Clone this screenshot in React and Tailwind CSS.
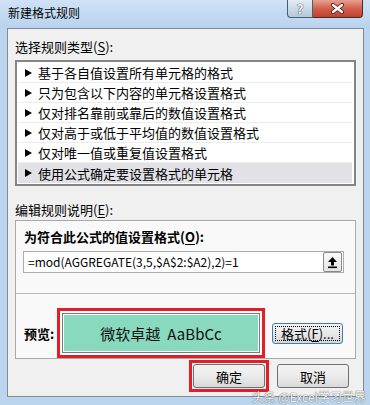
// App.jsx

const RULES = [
  "基于各自值设置所有单元格的格式",
  "只为包含以下内容的单元格设置格式",
  "仅对排名靠前或靠后的数值设置格式",
  "仅对高于或低于平均值的数值设置格式",
  "仅对唯一值或重复值设置格式",
  "使用公式确定要设置格式的单元格",
];

function Key({ children }) {
  return <span className="underline underline-offset-[2px]">{children}</span>;
}

function WinButton({ children, focused, className = "" }) {
  return (
    <div
      className={`flex items-center justify-center rounded-[3px] border text-[13px] leading-none text-black ${
        focused
          ? "border-[#3c7fb1] bg-gradient-to-b from-[#f4f4f4] via-[#e8e8e8] to-[#d6d6d6] p-[2px]"
          : "border-[#707070] bg-gradient-to-b from-[#f2f2f2] via-[#ebebeb] to-[#d9d9d9]"
      } ${className}`}
    >
      {focused ? (
        <span className="flex h-full w-full items-center justify-center border border-dotted border-black">
          {children}
        </span>
      ) : (
        children
      )}
    </div>
  );
}

function RuleRow({ text, selected, last }) {
  return (
    <div
      className={`flex h-[20px] items-center pl-[7px] ${
        last ? "" : "border-b border-[#ececec]"
      } ${selected ? "bg-[#e1e1e6]" : ""}`}
    >
      <span className="mr-[6px] h-0 w-0 border-y-[4px] border-l-[7px] border-y-transparent border-l-black" />
      <span className="text-[13px] leading-none text-black">{text}</span>
    </div>
  );
}

function TitleBar() {
  return (
    <div className="flex h-[28px] shrink-0 items-start bg-gradient-to-b from-[#cfe2f6] to-[#b9d2ed]">
      <div className="mt-[5px] pl-[8px] text-[12px] leading-[16px] text-black">
        新建格式规则
      </div>
      <div className="ml-auto mr-[7px] flex">
        <div className="flex h-[18px] w-[26px] items-center justify-center rounded-bl-[4px] border border-t-0 border-[#4a5d73] bg-gradient-to-b from-[#e3ecf5] to-[#b5c7da] text-[13px] font-bold leading-none text-white [text-shadow:0_0_1px_#26384d,0_0_1px_#26384d]">
          ?
        </div>
        <div className="flex h-[18px] w-[50px] items-center justify-center rounded-br-[4px] border border-l-0 border-t-0 border-[#4a2a26] bg-gradient-to-b from-[#e8a090] via-[#d0604c] to-[#c0402e]">
          <svg width="15" height="11" viewBox="0 0 15 11">
            <path d="M3 2 L12 9 M12 2 L3 9" stroke="#3a1a16" strokeWidth="4" strokeLinecap="round" />
            <path d="M3 2 L12 9 M12 2 L3 9" stroke="#ffffff" strokeWidth="2.4" strokeLinecap="round" />
          </svg>
        </div>
      </div>
    </div>
  );
}

function RefButton() {
  return (
    <div className="ml-auto mr-[1px] flex h-[20px] w-[19px] items-center justify-center rounded-[2px] border border-[#8a8a8a] bg-gradient-to-b from-[#fafafa] to-[#e4e4e4]">
      <svg width="11" height="13" viewBox="0 0 11 13">
        <path d="M5.5 1 L10 6 H7 V9.5 H4 V6 H1 Z" fill="#000" />
        <rect x="1" y="10.5" width="9" height="1.6" fill="#000" />
      </svg>
    </div>
  );
}

export default function App() {
  return (
    <div className="relative flex h-[405px] w-[370px] flex-col overflow-hidden bg-[#bcd5ef] font-['Noto_Sans_CJK_SC',sans-serif]">
      <TitleBar />

      <div className="flex flex-1 flex-col pb-[8px] pl-[7px] pr-[6px]">
        <div className="flex flex-1 flex-col border border-[#7d8a98] bg-[#f0f0f0]">
          <div className="pl-[7px] pt-[10px] text-[13px] leading-[16px] text-black">
            选择规则类型(<Key>S</Key>):
          </div>

          <div className="ml-[7px] mt-[5px] h-[126px] w-[341px] border-2 border-[#858585] bg-white p-[1px] pr-[2px]">
            {RULES.map((r, i) => (
              <RuleRow key={r} text={r} selected={i === 5} last={i === 5} />
            ))}
          </div>

          <div className="mt-[16px] pl-[7px] text-[13px] leading-[16px] text-black">
            编辑规则说明(<Key>E</Key>):
          </div>

          <div className="ml-[7px] mt-[2px] w-[341px] border border-[#a8a8a8] bg-[#f9f9f9]">
            <div className="pl-[8px] pt-[8px] text-[13px] font-bold leading-[16px] text-black">
              为符合此公式的值设置格式(<Key>O</Key>):
            </div>

            <div className="ml-[7px] mt-[6px] flex h-[22px] w-[321px] items-center border border-[#abadb3] bg-white pl-[4px]">
              <span className="text-[12px] leading-none text-black">
                =mod(AGGREGATE(3,5,$A$2:$A2),2)=1
              </span>
              <RefButton />
            </div>

            <div className="mt-[20px] h-px bg-[#b9b9b9]" />

            <div className="mt-[14px] flex items-center pl-[8px]">
              <div className="w-[33px] text-[13px] font-bold leading-none text-black">
                预览:
              </div>
              <div className="h-[50px] w-[208px] border-[3px] border-[#e31e26] bg-white p-[2px]">
                <div className="h-full w-full border border-[#7a7a7a] bg-white p-[1px]">
                  <div className="flex h-full w-full items-center justify-center gap-[7px] bg-[#88d9bd] text-[15px] leading-none text-[#111]">
                    <span>微软卓越</span>
                    <span>AaBbCc</span>
                  </div>
                </div>
              </div>
              <WinButton focused className="ml-[7px] h-[21px] w-[71px]">
                格式(<Key>F</Key>)...
              </WinButton>
            </div>
          </div>

          <div className="mt-[1px] flex h-[32px] items-center justify-end gap-[8px] pr-[14px]">
            <div className="h-[32px] w-[80px] border-[3px] border-[#e31e26] p-[1px]">
              <WinButton className="h-full w-full">确定</WinButton>
            </div>
            <WinButton className="h-[24px] w-[72px]">取消</WinButton>
          </div>
        </div>
      </div>

      <div className="absolute bottom-[2px] right-[4px] text-[12px] leading-none text-white opacity-90 [text-shadow:0_0_1px_#555,0_0_1px_#555]">
        头条 @Excel学习世界
      </div>
    </div>
  );
}
